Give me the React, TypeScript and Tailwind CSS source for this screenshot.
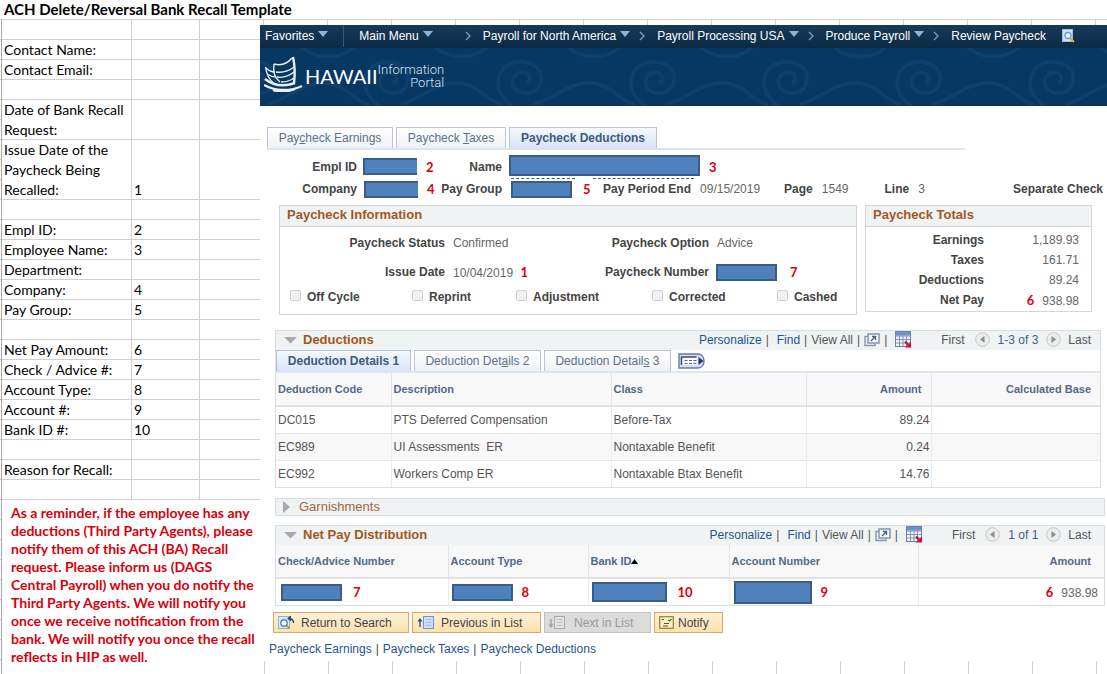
import type { ReactNode } from 'react';
import clsx from 'clsx';

type SheetRow = { label: string; value?: string; height?: string };

const sheetRows: SheetRow[] = [
  { label: '' },
  { label: 'Contact Name:' },
  { label: 'Contact Email:' },
  { label: '' },
  { label: 'Date of Bank Recall Request:', height: 'h-10' },
  { label: 'Issue Date of the Paycheck Being Recalled:', value: '1', height: 'h-15' },
  { label: '' },
  { label: 'Empl ID:', value: '2' },
  { label: 'Employee Name:', value: '3' },
  { label: 'Department:' },
  { label: 'Company:', value: '4' },
  { label: 'Pay Group:', value: '5' },
  { label: '' },
  { label: 'Net Pay Amount:', value: '6' },
  { label: 'Check / Advice #:', value: '7' },
  { label: 'Account Type:', value: '8' },
  { label: 'Account #:', value: '9' },
  { label: 'Bank ID #:', value: '10' },
  { label: '' },
  { label: 'Reason for Recall:' },
  { label: '' },
];

const reminderLines = [
  'As a reminder, if the employee has any',
  'deductions (Third Party Agents), please',
  'notify them of this ACH (BA) Recall',
  'request. Please inform us (DAGS',
  'Central Payroll) when you do notify the',
  'Third Party Agents. We will notify you',
  'once we receive notification from the',
  'bank. We will notify you once the recall',
  'reflects in HIP as well.',
];

const deductions = [
  { code: 'DC015', description: 'PTS Deferred Compensation', type: 'Before-Tax', amount: '89.24' },
  { code: 'EC989', description: 'UI Assessments  ER', type: 'Nontaxable Benefit', amount: '0.24' },
  { code: 'EC992', description: 'Workers Comp ER', type: 'Nontaxable Btax Benefit', amount: '14.76' },
];

const checks = [
  { id: 'off-cycle', label: 'Off Cycle', width: 'w-[122px]' },
  { id: 'reprint', label: 'Reprint', width: 'w-[104px]' },
  { id: 'adjustment', label: 'Adjustment', width: 'w-[136px]' },
  { id: 'corrected', label: 'Corrected', width: 'w-[125px]' },
  { id: 'cashed', label: 'Cashed', width: '' },
];

const totals = [
  { label: 'Earnings', value: '1,189.93' },
  { label: 'Taxes', value: '161.71' },
  { label: 'Deductions', value: '89.24' },
  { label: 'Net Pay', value: '938.98', mark: '6' },
];

const Mark = ({ children, className }: { children: ReactNode; className?: string }) => (
  <span className={clsx("font-['Lato',sans-serif] text-[13px] leading-4 font-bold text-[#d8000c]", className)}>
    {children}
  </span>
);

const Redacted = ({ className }: { className?: string }) => (
  <span className={clsx('block shrink-0 border-2 border-[#385d8a] bg-[#4f81bd]', className)} />
);

const Label = ({ children, className }: { children: ReactNode; className?: string }) => (
  <span className={clsx('shrink-0 font-bold whitespace-nowrap text-[#444]', className)}>{children}</span>
);

const Caret = () => (
  <svg width="10" height="6" viewBox="0 0 10 6" className="mb-1 shrink-0" aria-hidden="true">
    <path d="M0 0h10L5 6z" fill="#8fb4d6" />
  </svg>
);

const Chevron = () => (
  <svg width="6" height="10" viewBox="0 0 6 10" className="shrink-0" aria-hidden="true">
    <path d="M1 1l4 4-4 4" fill="none" stroke="#7f9bb5" strokeWidth="1.4" />
  </svg>
);

const Toggle = ({ open }: { open: boolean }) => (
  <svg width="13" height="12" viewBox="0 0 13 12" className="shrink-0" aria-hidden="true">
    <path d={open ? 'M0 3h13L6.500 9.500z' : 'M3 0v12l7-6z'} fill="#a9a9a9" />
  </svg>
);

const PopOutIcon = () => (
  <svg width="16" height="14" viewBox="0 0 16 14" aria-hidden="true">
    <path d="M3.500 3.500h-2.500v9h10v-2" fill="none" stroke="#8794ab" strokeWidth="1.400" />
    <rect x="4" y="1" width="11" height="9" fill="#f4f8fc" stroke="#7d8dab" strokeWidth="1.400" />
    <path d="M7 8l4-4M8 3.500h3.500v3.500" fill="none" stroke="#456088" strokeWidth="1.300" />
  </svg>
);

const GridIcon = () => (
  <svg width="17" height="17" viewBox="0 0 17 17" aria-hidden="true">
    <rect x="0.500" y="0.500" width="15" height="15" fill="#f4f6fb" stroke="#6d80ae" />
    <rect x="1" y="1" width="14" height="3.500" fill="#6f8fd0" />
    <path d="M1 5h14M1 8.500h14M1 12h14M4.500 4v11M8 4v11M11.500 4v11" stroke="#8091bb" strokeWidth="1" />
    <path d="M10 10.500l3 3" stroke="#c8102e" strokeWidth="2.200" />
    <path d="M16 10.500v6h-6z" fill="#c8102e" />
  </svg>
);

const Arrow = ({ back }: { back?: boolean }) => (
  <svg width="15" height="15" viewBox="0 0 15 15" className="shrink-0" aria-hidden="true">
    <circle cx="7.500" cy="7.500" r="6.800" fill="#ececec" stroke="#c6c6c6" />
    <path d={back ? 'M9.500 4v7L5 7.500z' : 'M5.500 4v7L10 7.500z'} fill="#8c8c8c" />
  </svg>
);

const ShowAllIcon = () => (
  <svg width="28" height="16" viewBox="0 0 28 16" aria-hidden="true">
    <path d="M1 1h19c8 0 8 14 0 14H1z" fill="#d5dcf6" stroke="#6a77ab" strokeWidth="1.400" />
    <rect x="3.500" y="4" width="16" height="8" fill="#fff" />
    <path d="M3.500 12V4h15" fill="none" stroke="#3c4a8c" strokeWidth="1.500" />
    <path d="M6.500 7.500h3M11 7.500h3M15.500 7.500h3M6.500 10.500h3M11 10.500h3M15.500 10.500h3" stroke="#4d5fae" strokeWidth="1.200" />
    <path d="M20.500 4l5 4-5 4z" fill="#2a3478" />
  </svg>
);

const PageSearchIcon = () => (
  <svg width="13" height="14" viewBox="0 0 13 14" aria-hidden="true">
    <rect x="0.500" y="0.500" width="10" height="12" fill="#cfe2f8" stroke="#9dbde4" />
    <circle cx="6" cy="6.500" r="3" fill="#eef6ff" stroke="#6f9bd0" strokeWidth="1.300" />
    <path d="M8.500 9.500l3.500 3.500" stroke="#d2b431" strokeWidth="2" />
  </svg>
);

const ReturnIcon = () => (
  <svg width="17" height="15" viewBox="0 0 17 15" aria-hidden="true">
    <rect x="0.500" y="1.500" width="11" height="12" fill="#dcebfb" stroke="#8fb0dc" />
    <circle cx="6" cy="8" r="3.200" fill="#f4faff" stroke="#4e86c6" strokeWidth="1.400" />
    <path d="M8.500 10.500l3 3" stroke="#b79a3a" strokeWidth="1.800" />
    <path d="M15.500 8c0-3-1.500-4.500-5-4.500" fill="none" stroke="#274a7c" strokeWidth="1.400" />
    <path d="M13 0.500L9 3.500l4 3z" fill="#274a7c" />
  </svg>
);

const ListIcon = ({ up }: { up?: boolean }) => (
  <svg width="17" height="14" viewBox="0 0 17 14" aria-hidden="true">
    <rect x="6.500" y="0.500" width="10" height="12" fill={up ? '#cfdffa' : '#e4e4e4'} stroke={up ? '#6f94d2' : '#ababab'} />
    <path d="M8.500 3.500h6M8.500 6.500h6M8.500 9.500h6" stroke={up ? '#9db9ea' : '#bcbcbc'} />
    <path d={up ? 'M3 11V3' : 'M3 3v8'} stroke={up ? '#274a7c' : '#a0a0a0'} strokeWidth="1.300" />
    <path d={up ? 'M0.500 5.500L3 2l2.500 3.500z' : 'M0.500 8.500L3 12l2.500-3.500z'} fill={up ? '#274a7c' : '#a0a0a0'} />
  </svg>
);

const NotifyIcon = () => (
  <svg width="15" height="13" viewBox="0 0 15 13" aria-hidden="true">
    <rect x="0.700" y="0.700" width="13.600" height="11.600" fill="#fdf3b8" stroke="#8b7f45" strokeWidth="1.200" />
    <path d="M2.500 3.500h2.500M5 7.500h5M4 10h5" stroke="#4f5a4b" strokeWidth="1.200" />
    <path d="M9 4l1.500 1L12.500 3" fill="none" stroke="#3f7a3e" strokeWidth="1.200" />
  </svg>
);

// double-hulled canoe with two sails
const CanoeLogo = () => (
  <svg width="40" height="36" viewBox="0 0 40 36" fill="none" stroke="#e8f0f8" aria-hidden="true">
    <path d="M1.500 11c1 7 3 12 8 16" strokeWidth="1.400" />
    <path d="M29 1c2 9 2 18 1 26" strokeWidth="2.400" />
    <path d="M10 8c-1 8 0 13 6 18M10 8c7 2 13 0 18-6" strokeWidth="1.400" />
    <path d="M2 12c3 3 6 4 9 4M3 18c3 2 6 3 9 3M12 16c7 1 13-1 18-5M13 21c6 1 12-1 17-5M17 26c5 0 9-1 13-4" strokeWidth="1.300" />
    <path d="M1 23c9 7 19 8 30 4M0 29c11 6 25 7 38 1M9 34c8 2 15 2 22-1" strokeWidth="2.400" />
  </svg>
);

const BannerSwirls = () => (
  <svg className="absolute inset-0 h-full w-full" aria-hidden="true">
    <defs>
      <pattern id="swirl" x="61" y="0" width="133" height="58" patternUnits="userSpaceOnUse">
        <g fill="none" stroke="#1a4b78" strokeWidth="3.500" opacity="0.400">
          <path d="M58 58C46 48 42 40 45 29c3-11 13-16 24-15 12 1 19 8 18 18-1 9-8 14-17 13-8-1-13-7-11-14 2-6 9-8 14-5 4 3 3 8-1 9" />
          <path d="M-40 54C-24 36-10 34 6 35c20 2 28 20 42 21" />
          <path d="M80 56C100 52 112 34 139 35" />
          <path d="M-20-2C-8 10 18 14 34-2M113-2c12 12 38 16 54 0" />
        </g>
      </pattern>
    </defs>
    <rect width="100%" height="100%" fill="url(#swirl)" />
  </svg>
);

const Tab = ({ active, children, className }: { active?: boolean; children: ReactNode; className?: string }) => (
  <button
    type="button"
    role="tab"
    aria-selected={!!active}
    className={clsx(
      'shrink-0 border border-b-0 border-[#b9c4d4] text-center whitespace-nowrap',
      active
        ? 'bg-linear-to-b from-[#f4f8fe] to-[#d8e4f6] font-bold text-[#3f5a7d]'
        : 'bg-linear-to-b from-white to-[#eef1f6] text-[#5c7089]',
      className
    )}
  >
    {children}
  </button>
);

const GridToolbar = ({ title, range, className }: { title: string; range: string; className?: string }) => (
  <div className={clsx('flex h-[19px] items-center bg-[#eff3f4] pb-[2px] pl-2 text-[#555]', className)}>
    <button type="button" className="flex items-center gap-[6px]">
      <Toggle open />
      <h2 className="text-[13px] font-bold text-[#a2571f]">{title}</h2>
    </button>
    <div className="ml-auto flex items-center gap-1 whitespace-nowrap">
      <a href="#personalize" className="text-[#1f5590]">Personalize</a>
      <span>|</span>
      <a href="#find" className="ml-1 text-[#1f5590]">Find</a>
      <span>|</span>
      <span>View All</span>
      <span>|</span>
      <button type="button" aria-label="Zoom"><PopOutIcon /></button>
      <span>|</span>
      <button type="button" aria-label="Download" className="ml-1"><GridIcon /></button>
      <span className="ml-[25px]">First</span>
      <button type="button" aria-label="Previous" className="ml-[6px]"><Arrow back /></button>
      <span className="ml-1 text-[#3d5f8a]">{range}</span>
      <button type="button" aria-label="Next" className="ml-1"><Arrow /></button>
      <span className="ml-[3px]">Last</span>
    </div>
  </div>
);

const ActionButton = ({ icon, children, disabled, className }: { icon: ReactNode; children: ReactNode; disabled?: boolean; className?: string }) => (
  <button
    type="button"
    disabled={disabled}
    className={clsx(
      'flex h-[21px] items-center border whitespace-nowrap',
      disabled
        ? 'border-[#c4c4c4] bg-[#dcdcdc] text-[#9a9a9a]'
        : 'border-[#d5a967] bg-linear-to-b from-[#fdf0d6] to-[#fbe0b0] text-[#444]',
      className
    )}
  >
    {icon}
    {children}
  </button>
);

const Sheet = () => (
  <aside className="flex w-[260px] shrink-0">
    <div className="w-[2px] shrink-0 border-r border-[#a6a6a6] bg-[repeating-linear-gradient(to_bottom,transparent_0,transparent_19px,#c8c8c8_19px,#c8c8c8_20px)]" />
    <div className="flex-1 font-['Lato',sans-serif] text-black">
      <table className="w-full table-fixed border-separate border-spacing-0 text-[14px] leading-5">
        <colgroup>
          <col className="w-[130px]" />
          <col className="w-[68px]" />
          <col />
        </colgroup>
        <tbody>
          {sheetRows.map((row, i) => (
            <tr key={i}>
              <td className={clsx('border-r border-b border-[#d0d0d0] p-0 pl-[2px]', row.height ?? 'h-5')}>
                <div className="-mb-px pr-1">{row.label}</div>
              </td>
              <td className="border-r border-b border-[#d0d0d0] p-0 pl-[2px] align-bottom">
                <div className="-mb-px">{row.value}</div>
              </td>
              <td className="border-b border-[#d0d0d0] p-0" />
            </tr>
          ))}
        </tbody>
      </table>
      <p className="pt-1 pl-[9px] text-[14px] leading-[18px] font-bold whitespace-nowrap text-[#d8000c]">
        {reminderLines.map((line) => (
          <span key={line} className="block">{line}</span>
        ))}
      </p>
    </div>
  </aside>
);

const PortalHeader = () => (
  <header className="text-white">
    <nav className="flex h-[23px] items-center bg-linear-to-b from-[#173a59] to-[#0c2a45] pb-px pl-[5px] whitespace-nowrap">
      <a href="#favorites" className="flex items-center gap-1">Favorites <Caret /></a>
      <span className="ml-[15px] h-full w-px bg-[#3a5a78]" />
      <a href="#menu" className="ml-[15px] flex items-center gap-1">Main Menu <Caret /></a>
      <span className="ml-8"><Chevron /></span>
      <a href="#na" className="ml-3 flex items-center gap-1">Payroll for North America <Caret /></a>
      <span className="ml-[9px]"><Chevron /></span>
      <a href="#usa" className="ml-3 flex items-center gap-1">Payroll Processing USA <Caret /></a>
      <span className="ml-[9px]"><Chevron /></span>
      <a href="#produce" className="ml-3 flex items-center gap-1">Produce Payroll <Caret /></a>
      <span className="ml-[9px]"><Chevron /></span>
      <a href="#review" className="ml-3">Review Paycheck</a>
      <button type="button" aria-label="Search page" className="ml-4"><PageSearchIcon /></button>
    </nav>
    <div className="relative h-[58px] bg-[#073763]">
      <BannerSwirls />
      <div className="relative flex pt-2 pl-1">
        <CanoeLogo />
        <span className="ml-px font-['Lato',sans-serif] text-[20px] leading-10">HAWAII</span>
        <span className="mt-[7px] text-right font-['Roboto',sans-serif] text-[13px] leading-[13px] font-light text-[#d5e2ee]">
          Information<br />Portal
        </span>
      </div>
    </div>
  </header>
);

const EmployeeFields = () => (
  <div className="pt-[5px] text-[#666]">
    <div className="flex h-[23px] items-center">
      <Label className="w-[97px] text-right">Empl ID</Label>
      <Redacted className="ml-[6px] h-[17px] w-[54px] border-r-0" />
      <Mark className="ml-[9px] w-[14px]">2</Mark>
      <Label className="w-[62px] text-right">Name</Label>
      <Redacted className="ml-[7px] h-[21px] w-[191px] self-start" />
      <Mark className="ml-[9px]">3</Mark>
    </div>
    <div className="ml-[251px] flex gap-[18px]">
      <span className="w-[64px] border-t border-dashed border-[#555]" />
      <span className="w-[101px] border-t border-dashed border-[#555]" />
    </div>
    <div className="flex h-5 items-center">
      <Label className="w-[97px] text-right">Company</Label>
      <Redacted className="ml-[7px] h-[17px] w-[54px] border-r-0" />
      <Mark className="ml-[9px] w-[13px]">4</Mark>
      <Label className="w-[62px] text-right">Pay Group</Label>
      <Redacted className="ml-[9px] h-[17px] w-[61px]" />
      <Mark className="ml-[11px] w-5">5</Mark>
      <Label>Pay Period End</Label>
      <span className="ml-[9px]">09/15/2019</span>
      <Label className="ml-6">Page</Label>
      <span className="ml-[9px]">1549</span>
      <Label className="ml-9">Line</Label>
      <span className="ml-[9px]">3</span>
      <Label className="ml-auto pr-1">Separate Check</Label>
    </div>
  </div>
);

const PaycheckPanels = () => (
  <div className="flex items-start gap-2 pt-[6px] pr-[15px] pl-[19px] text-[#666]">
    <section className="h-[110px] flex-1 border border-[#d3d7da]">
      <h2 className="h-[21px] border-b border-[#cdd3d8] bg-[#eff3f4] pl-[7px] text-[13px] leading-[18px] font-bold text-[#a2571f]">
        Paycheck Information
      </h2>
      <div className="flex h-8 items-center">
        <Label className="w-[165px] text-right">Paycheck Status</Label>
        <span className="w-[109px] pl-2">Confirmed</span>
        <Label className="w-[155px] text-right">Paycheck Option</Label>
        <span className="pl-2">Advice</span>
      </div>
      <div className="flex h-[26px] items-center">
        <Label className="w-[165px] text-right">Issue Date</Label>
        <span className="w-[109px] pl-2">
          10/04/2019 <Mark className="ml-1">1</Mark>
        </span>
        <Label className="w-[155px] text-right">Paycheck Number</Label>
        <Redacted className="ml-[7px] h-[17px] w-[61px]" />
        <Mark className="ml-[13px]">7</Mark>
      </div>
      <div className="flex h-6 items-center pl-[10px]">
        {checks.map((check) => (
          <span key={check.id} className={clsx('flex items-center gap-[6px]', check.width)}>
            <input
              id={check.id}
              type="checkbox"
              disabled
              className="mb-1 h-[11px] w-[11px] shrink-0 appearance-none rounded-[2px] border border-[#cfcfcf] bg-[#f1f1f1]"
            />
            <label htmlFor={check.id} className="font-bold text-[#444]">{check.label}</label>
          </span>
        ))}
      </div>
    </section>
    <section className="w-[227px] border border-[#d3d7da] pb-px">
      <h2 className="mb-[3px] h-[21px] border-b border-[#cdd3d8] bg-[#eff3f4] pl-[7px] text-[13px] leading-[18px] font-bold text-[#a2571f]">
        Paycheck Totals
      </h2>
      {totals.map((item) => (
        <div key={item.label} className="flex h-5 items-center pr-3">
          <Label className="w-[118px] text-right">{item.label}</Label>
          <span className="ml-auto">
            {item.mark && <Mark className="mr-2">{item.mark}</Mark>}
            {item.value}
          </span>
        </div>
      ))}
    </section>
  </div>
);

const DeductionsGrid = () => (
  <section className="mt-[15px] mr-[6px] ml-[15px] border border-[#d9dee3]">
    <GridToolbar title="Deductions" range="1-3 of 3" className="pr-[9px]" />
    <div role="tablist" className="flex items-end gap-[3px]">
      <Tab active className="h-[21px] w-[135px]">Deduction Details 1</Tab>
      <Tab className="h-[21px] w-[127px]">Deduction Det<u>a</u>ils 2</Tab>
      <Tab className="h-[21px] w-[127px]">Deduction Detail<u>s</u> 3</Tab>
      <button type="button" aria-label="Show all columns" className="mb-[2px] ml-1"><ShowAllIcon /></button>
    </div>
    <table className="w-full table-fixed border-t-2 border-[#dfe5ef] text-left text-[#555]">
      <colgroup>
        <col className="w-[115px]" />
        <col className="w-[220px]" />
        <col className="w-[195px]" />
        <col className="w-[125px]" />
        <col />
      </colgroup>
      <thead className="border-b-2 border-[#e3e3e3] bg-[#f8f8f8] text-[11px] text-[#536a86]">
        <tr className="h-[34px]">
          <th className="border-r border-[#e3e3e3] pl-[2px]">Deduction Code</th>
          <th className="border-r border-[#e3e3e3] pl-[2px]">Description</th>
          <th className="border-r border-[#e3e3e3] pl-[2px]">Class</th>
          <th className="border-r border-[#e3e3e3] pr-[9px] text-right">Amount</th>
          <th className="pr-[9px] text-right">Calculated Base</th>
        </tr>
      </thead>
      <tbody>
        {deductions.map((row) => (
          <tr key={row.code} className="h-[27px] border-b border-[#e6e6e6] last:border-b-0 even:bg-[#f8f8f8]">
            <td className="border-r border-[#ececec] pl-[2px]">{row.code}</td>
            <td className="border-r border-[#ececec] pl-[2px] whitespace-pre">{row.description}</td>
            <td className="border-r border-[#ececec] pl-[2px]">{row.type}</td>
            <td className="border-r border-[#ececec] pr-px text-right">{row.amount}</td>
            <td />
          </tr>
        ))}
      </tbody>
    </table>
  </section>
);

const NetPayGrid = () => (
  <section className="mt-[9px] mr-[2px] ml-[15px] border border-[#d9dee3]">
    <GridToolbar title="Net Pay Distribution" range="1 of 1" className="pr-[13px]" />
    <table className="w-full table-fixed text-left text-[#666]">
      <colgroup>
        <col className="w-[172px]" />
        <col className="w-[140px]" />
        <col className="w-[141px]" />
        <col className="w-[189px]" />
        <col />
      </colgroup>
      <thead className="border-b-2 border-[#e3e3e3] bg-[#f8f8f8] text-[11px] text-[#536a86]">
        <tr className="h-[33px]">
          <th className="border-r border-[#e3e3e3] pl-[2px]">Check/Advice Number</th>
          <th className="border-r border-[#e3e3e3] pl-[2px]">Account Type</th>
          <th className="border-r border-[#e3e3e3] pl-[2px]">
            <span className="flex items-center">
              Bank ID
              <svg width="7" height="5" viewBox="0 0 7 5" aria-hidden="true"><path d="M0 5h7L3.500 0z" fill="#000" /></svg>
            </span>
          </th>
          <th className="border-r border-[#e3e3e3] pl-[2px]">Account Number</th>
          <th className="pr-[13px] text-right">Amount</th>
        </tr>
      </thead>
      <tbody>
        <tr className="h-[27px]">
          <td className="border-r border-[#ececec] pl-[5px]">
            <span className="flex items-center gap-[11px]"><Redacted className="h-[17px] w-[61px]" /><Mark>7</Mark></span>
          </td>
          <td className="border-r border-[#ececec] pl-[3px]">
            <span className="flex items-center gap-[9px]"><Redacted className="h-[17px] w-[61px]" /><Mark>8</Mark></span>
          </td>
          <td className="border-r border-[#ececec] pl-[3px]">
            <span className="flex items-center gap-[11px]"><Redacted className="h-5 w-[75px]" /><Mark>10</Mark></span>
          </td>
          <td className="border-r border-[#ececec] pl-1">
            <span className="flex items-center gap-[9px]"><Redacted className="h-[23px] w-[78px]" /><Mark>9</Mark></span>
          </td>
          <td className="pr-[6px] text-right"><Mark className="mr-2">6</Mark>938.98</td>
        </tr>
      </tbody>
    </table>
  </section>
);

export default function App() {
  return (
    <div className="flex min-h-screen flex-col bg-white">
      <h1 className="h-5 border-b border-[#d0d0d0] pl-1 font-['Lato',sans-serif] text-[15px] leading-[19px] font-bold text-black">
        ACH Delete/Reversal Bank Recall Template
      </h1>
      <div className="flex flex-1">
        <Sheet />
        <main className="flex min-w-0 flex-1 flex-col font-['Liberation_Sans',Arial,sans-serif] text-[12px] leading-4">
          <div className="h-[5px] bg-[repeating-linear-gradient(to_right,transparent_0,transparent_3px,#d0d0d0_3px,#d0d0d0_4px,transparent_4px,transparent_64px)]" />
          <PortalHeader />
          <div role="tablist" className="mt-[21px] mr-[142px] ml-[7px] flex gap-[3px] border-b-2 border-[#dde4ef]">
            <Tab className="h-[21px] w-[126px]">Pay<u>c</u>heck Earnings</Tab>
            <Tab className="h-[21px] w-[110px]">Paycheck <u>T</u>axes</Tab>
            <Tab active className="h-[21px] w-[148px]">Paycheck Deductions</Tab>
          </div>
          <EmployeeFields />
          <PaycheckPanels />
          <DeductionsGrid />
          <section className="mt-[10px] mr-[2px] ml-[15px] border border-[#d9dee3] bg-[#eff3f4] pl-1">
            <button type="button" className="flex items-center gap-[6px]">
              <Toggle open={false} />
              <h2 className="text-[13px] text-[#a2673c]">Garnishments</h2>
            </button>
          </section>
          <NetPayGrid />
          <div className="mt-[6px] ml-[13px] flex gap-[3px]">
            <ActionButton icon={<ReturnIcon />} className="w-[136px] gap-[6px] pl-1">Return to Search</ActionButton>
            <ActionButton icon={<ListIcon up />} className="w-[129px] gap-[7px] pl-1">Previous in List</ActionButton>
            <ActionButton icon={<ListIcon />} disabled className="w-[107px] gap-[9px] pl-[3px]">Next in List</ActionButton>
            <ActionButton icon={<NotifyIcon />} className="w-[69px] gap-1 pl-1">Notify</ActionButton>
          </div>
          <nav className="mt-2 flex gap-1 pl-[9px] text-[#1f5590]">
            <a href="#earnings">Paycheck Earnings</a>
            <span className="text-[#444]">|</span>
            <a href="#taxes">Paycheck Taxes</a>
            <span className="text-[#444]">|</span>
            <a href="#deductions">Paycheck Deductions</a>
          </nav>
          <div className="mt-1 min-h-3 flex-1 bg-[repeating-linear-gradient(to_right,transparent_0,transparent_4px,#d0d0d0_4px,#d0d0d0_5px,transparent_5px,transparent_64px)]" />
        </main>
      </div>
    </div>
  );
}
